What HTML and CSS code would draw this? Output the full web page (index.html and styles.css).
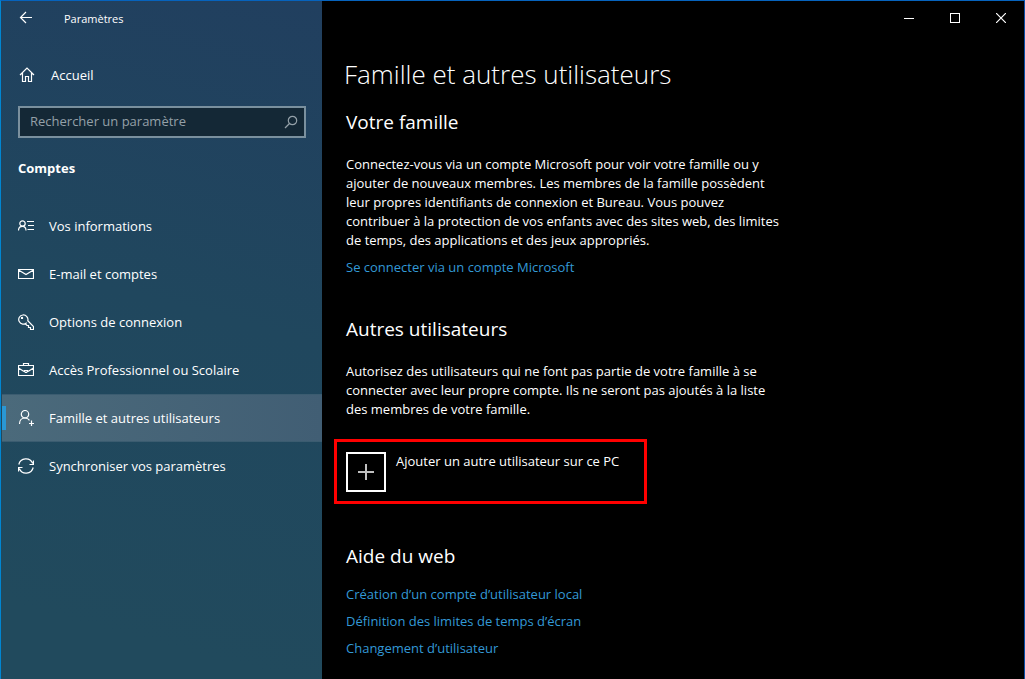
FILE: index.html
```html
<!DOCTYPE html>
<html lang="fr">
<head>
<meta charset="utf-8">
<meta name="viewport" content="width=device-width, initial-scale=1">
<title>Paramètres</title>
<link rel="stylesheet" href="styles.css">
</head>
<body>
<div class="window">
  <aside class="sidebar">
    <header class="titlebar">
      <button class="back" type="button" aria-label="Retour">
        <svg class="icon" width="16" height="16" viewBox="0 0 16 16"><path d="M14 7.500H2.500M8 2L2.500 7.500L8 13"/></svg>
      </button>
      <span class="app-name">Paramètres</span>
    </header>
    <a class="home" href="#">
      <svg class="icon" width="16" height="16" viewBox="0 0 16 16"><path d="M1 8L8 1L15 8M3.500 6V14.500H6.500V9.500H9.500V14.500H12.500V6"/></svg>
      <span>Accueil</span>
    </a>
    <form class="search">
      <input class="search-input" type="text" placeholder="Rechercher un paramètre" aria-label="Rechercher un paramètre">
      <button class="search-button" type="button" aria-label="Rechercher">
        <svg class="icon" width="14" height="14" viewBox="0 0 14 14"><circle cx="8.500" cy="5.500" r="4.200"/><path d="M5.500 8.500L1 13"/></svg>
      </button>
    </form>
    <h2 class="section-name">Comptes</h2>
    <nav class="nav">
      <a class="nav-item" href="#">
        <svg class="icon" width="16" height="16" viewBox="0 0 16 16"><circle cx="4.500" cy="5.500" r="2.700"/><path d="M.5 12.500C.5 10 2 8.300 4.500 8.300S8 10 8 12.500M9 3.500H16M10 7.500H16M9.500 11.500H16"/></svg>
        <span>Vos informations</span>
      </a>
      <a class="nav-item" href="#">
        <svg class="icon" width="16" height="16" viewBox="0 0 16 16"><path d="M.5 3.500H15.500V12.500H.5ZM.5 4L8 8.500L15.500 4"/></svg>
        <span>E-mail et comptes</span>
      </a>
      <a class="nav-item" href="#">
        <svg class="icon" width="16" height="16" viewBox="0 0 16 16"><path d="M8.700 8.700A4.600 4.600 0 1 1 9.800 6.700L15.500 12.500V15.500H12.500V13.500H10.500V11.500H9L7 9.500"/><circle cx="4" cy="3.900" r=".6"/></svg>
        <span>Options de connexion</span>
      </a>
      <a class="nav-item" href="#">
        <svg class="icon" width="16" height="16" viewBox="0 0 16 16"><path d="M.5 3.500H15.500V13.500H.5ZM5.500 3.500V1.500H10.500V3.500M.5 6L6 9.500M15.500 6L10 9.500M6.500 8.500H9.500V9.500L8.500 10.500H7.500L6.500 9.500Z"/></svg>
        <span>Accès Professionnel ou Scolaire</span>
      </a>
      <a class="nav-item selected" href="#" aria-current="page">
        <svg class="icon" width="16" height="16" viewBox="0 0 16 16"><circle cx="7" cy="4.200" r="3.700"/><path d="M1.500 14C1.500 10.500 3.500 8 7 8C9 8 10.500 8.800 11.500 10.300M13.500 10.500V16M11 13.500H16"/></svg>
        <span>Famille et autres utilisateurs</span>
      </a>
      <a class="nav-item" href="#">
        <svg class="icon" width="16" height="16" viewBox="0 0 16 16"><path d="M.8 6.500A7.300 7.300 0 0 1 14.700 5.500M15.500 2.500V6.500H11.500M15.200 9.500A7.300 7.300 0 0 1 1.300 10.500M.5 13.500V9.500H4.500"/></svg>
        <span>Synchroniser vos paramètres</span>
      </a>
    </nav>
  </aside>
  <div class="content">
    <div class="window-controls">
      <button class="control" type="button" aria-label="Réduire"><svg class="icon crisp" width="10" height="10" viewBox="0 0 10 10"><path d="M0 5.500H10"/></svg></button>
      <button class="control" type="button" aria-label="Agrandir"><svg class="icon crisp" width="10" height="10" viewBox="0 0 10 10"><path d="M.5 .5H9.500V9.500H.5Z"/></svg></button>
      <button class="control" type="button" aria-label="Fermer"><svg class="icon" width="10" height="10" viewBox="0 0 10 10"><path d="M0 0L10 10M10 0L0 10"/></svg></button>
    </div>
    <main class="page">
      <h1 class="page-title">Famille et autres utilisateurs</h1>
      <section class="group">
        <h2 class="group-title">Votre famille</h2>
        <p class="text">Connectez-vous via un compte Microsoft pour voir votre famille ou y ajouter de nouveaux membres. Les membres de la famille possèdent leur propres identifiants de connexion et Bureau. Vous pouvez contribuer à la protection de vos enfants avec des sites web, des limites de temps, des applications et des jeux appropriés.</p>
        <a class="link" href="#">Se connecter via un compte Microsoft</a>
      </section>
      <section class="group">
        <h2 class="group-title">Autres utilisateurs</h2>
        <p class="text">Autorisez des utilisateurs qui ne font pas partie de votre famille à se connecter avec leur propre compte. Ils ne seront pas ajoutés à la liste des membres de votre famille.</p>
        <button class="add-user" type="button">
          <span class="add-box"><svg class="icon plus" width="16" height="16" viewBox="0 0 16 16"><path d="M0 8H16M8 0V16"/></svg></span>
          <span>Ajouter un autre utilisateur sur ce PC</span>
        </button>
      </section>
      <section class="group help">
        <h2 class="group-title">Aide du web</h2>
        <a class="link" href="#">Création d’un compte d’utilisateur local</a>
        <a class="link" href="#">Définition des limites de temps d’écran</a>
        <a class="link" href="#">Changement d’utilisateur</a>
      </section>
    </main>
  </div>
</div>
</body>
</html>
```
FILE: styles.css
```css
* {
  box-sizing: border-box;
}

body {
  margin: 0;
  background: #000;
  color: #fff;
  font: 13px/19px "Open Sans", "Noto Sans", sans-serif;
}

button {
  padding: 0;
  border: 0;
  background: none;
  color: inherit;
  font: inherit;
}

a {
  color: inherit;
  text-decoration: none;
}

h1,
h2,
p {
  margin: 0;
}

.icon {
  display: block;
  flex: none;
  fill: none;
  stroke: currentColor;
  stroke-width: 1.2;
}

.crisp {
  shape-rendering: crispEdges;
  stroke-width: 1;
}

.window {
  display: grid;
  grid-template-columns: 321px 1fr;
  min-height: 100vh;
  border: 1px solid #0b4fa8;
  border-top-color: #0663bd;
  border-left-color: #0086d2;
  border-bottom: 0;
}

.sidebar {
  background: linear-gradient(15deg, #214a5d 10%, #20475e 55%, #213f5f 100%);
}

.titlebar {
  display: flex;
  align-items: center;
  gap: 30px;
  height: 34px;
  padding-left: 17px;
}

.app-name {
  font-size: 11px;
}

.home {
  display: flex;
  align-items: center;
  gap: 16px;
  height: 48px;
  margin-top: 16px;
  padding-left: 18px;
}

.search {
  display: flex;
  align-items: center;
  height: 32px;
  margin: 7px 16px 0 17px;
  border: 2px solid #7a909e;
  background: #142836;
  color: #94a0a8;
}

.search-input {
  flex: 1;
  min-width: 0;
  padding: 0 10px 2px;
  border: 0;
  outline: 0;
  background: none;
  color: #fff;
  font: inherit;
}

.search-input::placeholder {
  color: #94a0a8;
  opacity: 1;
}

.search-button {
  padding-right: 6px;
}

.section-name {
  margin: 20px 0 24px 17px;
  font-size: 13px;
  font-weight: 700;
  line-height: 20px;
}

.nav-item {
  display: flex;
  align-items: center;
  gap: 15px;
  height: 48px;
  padding-left: 17px;
}

.selected {
  margin-left: 1px;
  padding-left: 16px;
  border: solid #3b5c70;
  border-width: 1px 0;
  background:
    linear-gradient(#2a97d4, #2a97d4) 0 center / 4px 24px no-repeat,
    linear-gradient(90deg, #4b6a7b, #415e74);
}

.window-controls {
  display: flex;
  justify-content: flex-end;
  height: 34px;
}

.control {
  display: grid;
  place-items: center;
  width: 46px;
}

.page {
  padding: 20px 24px 20px;
}

.page-title {
  margin-left: -2px;
  font-size: 26px;
  font-weight: 340;
  line-height: 38px;
}

.group {
  display: flex;
  flex-direction: column;
  align-items: flex-start;
  max-width: 440px;
  margin-bottom: 23px;
}

.group-title {
  margin: 16px 0 20px;
  font-size: 19px;
  font-weight: 400;
  line-height: 26px;
}

.link {
  margin-top: 8px;
  color: #3399d6;
}

.add-user {
  display: flex;
  align-items: flex-start;
  gap: 10px;
  width: 313px;
  height: 65px;
  margin: 20px 0 0 -12px;
  padding: 10px 9px;
  border: 3px solid #f00;
}

.add-box {
  display: grid;
  place-items: center;
  width: 40px;
  height: 40px;
  border: 2px solid #fff;
}

.plus {
  color: #c0c0c0;
  stroke-width: 2;
}

.help {
  margin-bottom: 0;
}

.help .group-title {
  margin-bottom: 8px;
}
```
